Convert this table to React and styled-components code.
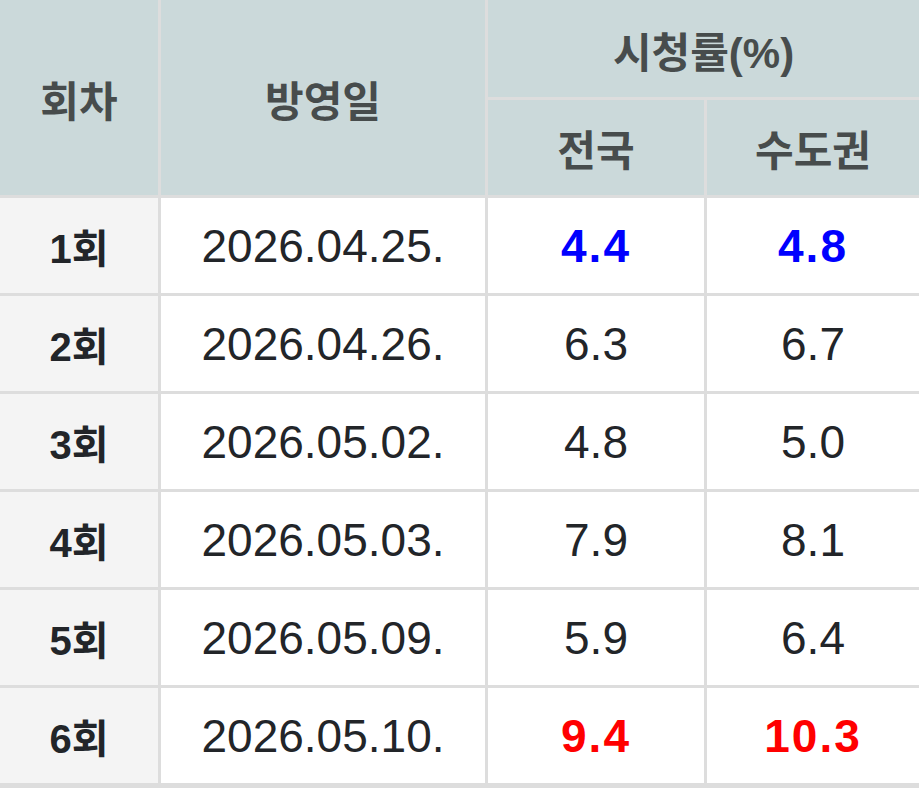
import styled, { createGlobalStyle } from "styled-components";

const GlobalStyle = createGlobalStyle`
  html, body {
    margin: 0;
    padding: 0;
    background: #ffffff;
  }
  body {
    font-family: "Liberation Sans", "Noto Sans CJK KR", sans-serif;
  }
`;

const Table = styled.div`
  display: grid;
  grid-template-columns: 158px 324px 216px 212px;
  grid-template-rows: 97px 95px repeat(6, 95px);
  gap: 3px;
  padding-bottom: 5px;
  background-color: #dddddd;
  width: 919px;
`;

const HeadCell = styled.div`
  grid-row: ${(p) => p.$row || "auto"};
  grid-column: ${(p) => p.$col || "auto"};
  display: flex;
  align-items: center;
  justify-content: center;
  background-color: #cbd9da;
  color: #474c4c;
  font-family: "Liberation Sans", "Noto Sans CJK KR", sans-serif;
  font-weight: 700;
  font-size: 42px;
  padding-top: ${(p) => (p.$top ? "2px" : "0")};
`;

const EpisodeCell = styled.div`
  display: flex;
  align-items: center;
  justify-content: center;
  background-color: #f4f4f4;
  color: #222529;
  font-weight: 700;
  font-size: 40px;
`;

const Cell = styled.div`
  display: flex;
  align-items: center;
  justify-content: center;
  background-color: #ffffff;
  color: ${(p) =>
    p.$tone === "low" ? "#0000ff" : p.$tone === "high" ? "#ff0000" : "#222529"};
  font-weight: ${(p) => (p.$tone ? 700 : 400)};
  font-size: 46px;
  letter-spacing: ${(p) => (p.$tone ? "2px" : "0")};
`;

const episodes = [
  { no: 1, date: "2026.04.25.", nation: "4.4", metro: "4.8", nTone: "low", mTone: "low" },
  { no: 2, date: "2026.04.26.", nation: "6.3", metro: "6.7" },
  { no: 3, date: "2026.05.02.", nation: "4.8", metro: "5.0" },
  { no: 4, date: "2026.05.03.", nation: "7.9", metro: "8.1" },
  { no: 5, date: "2026.05.09.", nation: "5.9", metro: "6.4" },
  { no: 6, date: "2026.05.10.", nation: "9.4", metro: "10.3", nTone: "high", mTone: "high" },
];

const App = () => {
  return (
    <>
      <GlobalStyle />
      <Table>
        <HeadCell $row="1 / 3" $col="1" $top>
          회차
        </HeadCell>
        <HeadCell $row="1 / 3" $col="2" $top>
          방영일
        </HeadCell>
        <HeadCell $row="1" $col="3 / 5" $top>
          시청률(%)
        </HeadCell>
        <HeadCell $row="2" $col="3">
          전국
        </HeadCell>
        <HeadCell $row="2" $col="4">
          수도권
        </HeadCell>
        {episodes.map((ep) => (
          <Row key={ep.no} ep={ep} />
        ))}
      </Table>
    </>
  );
};

const Row = ({ ep }) => (
  <>
    <EpisodeCell>{ep.no}회</EpisodeCell>
    <Cell>{ep.date}</Cell>
    <Cell $tone={ep.nTone}>{ep.nation}</Cell>
    <Cell $tone={ep.mTone}>{ep.metro}</Cell>
  </>
);

export default App;
